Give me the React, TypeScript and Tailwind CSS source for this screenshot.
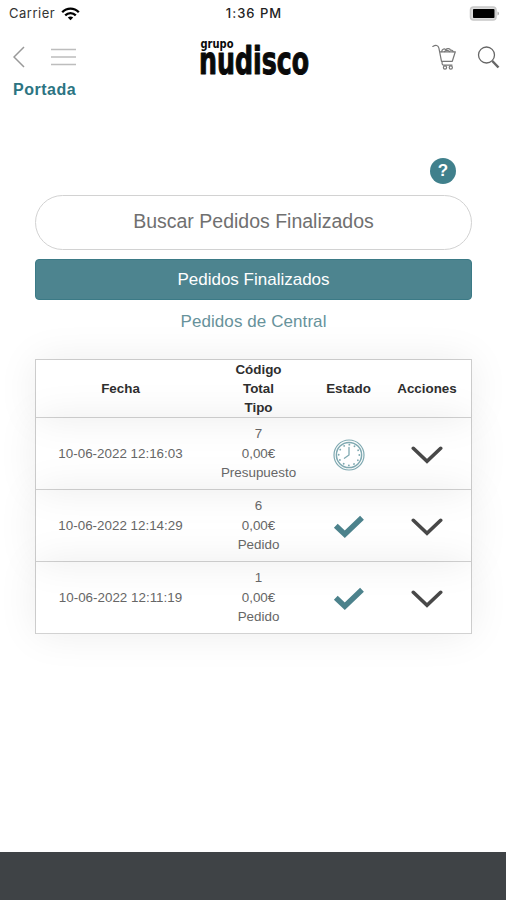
import { ReactNode } from "react";

const ORDERS = [
  { date: "10-06-2022 12:16:03", code: "7", total: "0,00€", type: "Presupuesto", done: false },
  { date: "10-06-2022 12:14:29", code: "6", total: "0,00€", type: "Pedido", done: true },
  { date: "10-06-2022 12:11:19", code: "1", total: "0,00€", type: "Pedido", done: true },
];

function StatusBar() {
  return (
    <div className="grid h-[27px] grid-cols-3 items-center pr-[6px] pl-[9px] font-['Inter',sans-serif] text-[13px] text-[#333]">
      <div className="flex items-center gap-[6px]">
        <span className="tracking-[0.5px]">Carrier</span>
        <svg width="19" height="14" viewBox="0 0 19 14" fill="none" stroke="#000" strokeWidth="2.3">
          <path d="M1.2 5.2C6 .3 13 .3 17.8 5.2" />
          <path d="M4.2 8.3c3.1-3 7.500-3 10.600 0" />
          <path d="M9.500 13.200 6.800 10.600c1.500-1.500 3.900-1.500 5.400 0z" fill="#000" stroke="none" />
        </svg>
      </div>
      <span className="pr-[1px] text-center font-medium tracking-[1px] text-[#222]">1:36 PM</span>
      <svg className="justify-self-end" width="31" height="15" viewBox="0 0 31 15">
        <rect x="1.500" y="1" width="25.500" height="13" rx="3" fill="#ddd" stroke="#c8c8c8" strokeWidth="1.500" />
        <rect x="4" y="3" width="21.500" height="9" rx="0.800" fill="#000" />
        <path d="M28.500 5.500c2 .8 2 3.200 0 4z" fill="#aaa" />
      </svg>
    </div>
  );
}

function Logo() {
  return (
    <svg
      className="overflow-visible"
      width="112"
      height="42"
      viewBox="0 0 112 42"
      fill="#0a0a0a"
      stroke="#0a0a0a"
      strokeLinejoin="round"
      fontFamily="'DejaVu Sans', sans-serif"
      fontWeight="700"
    >
      <text x="-0.500" y="12" fontSize="12" strokeWidth="0" textLength="33" lengthAdjust="spacingAndGlyphs">
        grupo
      </text>
      <text x="-2" y="38" fontSize="36.500" strokeWidth="1.100" textLength="110" lengthAdjust="spacingAndGlyphs">
        nudisco
      </text>
    </svg>
  );
}

function CartIcon() {
  return (
    <svg width="25" height="27" viewBox="0 0 25 27" fill="none" stroke="#777" strokeWidth="1.200" strokeLinecap="round" strokeLinejoin="round">
      <path d="M.8 2.400c3-1.700 5.400-1.300 6.100 1.700l2.600 13.200h10.800l3-9.500H7.700" />
      <path d="M9.700 7.600c.2-2.400 2.400-3.300 4-2 1.500-1.500 4.200-1.200 4.800.6 1.500-.3 2.500.4 2.600 1.500M12.500 7.600c1-1.700 4-1.700 5 0" />
      <path d="M10.300 17.500c-.6 1.600-.2 3.600 1.200 3.600h8.500" />
      <circle cx="13" cy="23.500" r="1.600" />
      <circle cx="18.800" cy="23.500" r="1.600" />
    </svg>
  );
}

function SearchIcon() {
  return (
    <svg width="23" height="23" viewBox="0 0 23 23" fill="none" stroke="#666">
      <circle cx="9.500" cy="9" r="8" strokeWidth="1.300" />
      <path d="m15.300 15 6.200 6.500" strokeWidth="2.500" />
    </svg>
  );
}

function ClockIcon() {
  return (
    <svg width="32" height="32" viewBox="0 0 32 32" fill="none" stroke="#7fa9b1" strokeLinecap="round">
      <circle cx="16" cy="16" r="15" strokeWidth="1.200" />
      <circle cx="16" cy="16" r="12.600" strokeWidth="1.500" />
      <circle cx="16" cy="16" r="10.300" strokeWidth="1.800" strokeDasharray="0.100 5.293" />
      <path d="M16 8.300V16l-4.600 3.200" strokeWidth="1.300" />
    </svg>
  );
}

function CheckIcon() {
  return (
    <svg width="32" height="24" viewBox="0 0 32 24" fill="none" stroke="#4c828c" strokeWidth="5.500">
      <path d="m2.800 10.800 9 8.500L29 2.800" />
    </svg>
  );
}

function ChevronIcon() {
  return (
    <svg width="32" height="18" viewBox="0 0 32 18" fill="none" stroke="#484848" strokeWidth="3.600" strokeLinecap="round">
      <path d="m2.300 2.300 13.700 13 13.700-13" />
    </svg>
  );
}

function Row({ children, className }: { children: ReactNode; className: string }) {
  return (
    <div
      className={`grid grid-cols-[169px_107px_73px_84px] items-center justify-items-center border-b border-[#d2d2d2] text-center text-[13.4px] shadow-[0_0_40px_rgba(0,0,0,0.08)] ${className}`}
    >
      {children}
    </div>
  );
}

export default function App() {
  return (
    <main className="flex h-[900px] w-[506px] flex-col overflow-hidden bg-white font-['Liberation_Sans',sans-serif]">
      <StatusBar />

      <header className="grid grid-cols-[1fr_112px_1fr] pr-[6px] pl-[13px]">
        <div className="flex h-[60px] items-center gap-[26px]">
          <svg width="12" height="22" viewBox="0 0 12 22" fill="none" stroke="#999" strokeWidth="1.500">
            <path d="M11 1 1 11l10 10" />
          </svg>
          <svg width="25" height="18" viewBox="0 0 25 18" stroke="#bdbdbd" strokeWidth="1.600">
            <path d="M0 1.500h25M0 9h25M0 16.500h25" />
          </svg>
        </div>
        <div className="pt-[9px]">
          <Logo />
        </div>
        <div className="flex h-[60px] items-center justify-end gap-[20px]">
          <CartIcon />
          <SearchIcon />
        </div>
      </header>
      <a className="-mt-[7px] ml-[13px] text-[16px] leading-5 font-bold tracking-[0.5px] text-[#2c7482]">Portada</a>

      <section className="mr-[34px] ml-[35px] flex flex-col pt-[58px]">
        <button className="mr-[16px] flex size-[26px] items-center justify-center self-end rounded-full bg-[#40808c] text-[17px] font-bold text-white">
          ?
        </button>
        <input
          className="mt-[11px] h-[55px] rounded-full border border-[#d2d2d2] pb-[2px] text-center text-[19.5px] text-[#666] placeholder:text-[#707070]"
          placeholder="Buscar Pedidos Finalizados"
        />
        <button className="mt-[9px] h-[41px] rounded-[4px] border border-[#3b7a86] bg-[#4d848f] text-[17px] text-white">
          Pedidos Finalizados
        </button>
        <button className="h-[43px] text-[17px] tracking-[0.08px] text-[#67929b]">Pedidos de Central</button>

        <div className="mt-[16px] border border-b-0 border-[#d2d2d2]">
          <Row className="h-[58px] leading-[19px] font-bold text-[#2e2e2e]">
            <span>Fecha</span>
            <span>
              Código
              <br />
              Total
              <br />
              Tipo
            </span>
            <span>Estado</span>
            <span>Acciones</span>
          </Row>
          {ORDERS.map((order) => (
            <Row key={order.date} className="h-[72px] leading-[19.5px] text-[#666]">
              <span>{order.date}</span>
              <span>
                {order.code}
                <br />
                {order.total}
                <br />
                {order.type}
              </span>
              <span className="pt-[2px]">{order.done ? <CheckIcon /> : <ClockIcon />}</span>
              <span className="pt-[2px]">
                <ChevronIcon />
              </span>
            </Row>
          ))}
        </div>
      </section>

      <footer className="mt-auto h-[48px] bg-[#3f4346]" />
    </main>
  );
}
